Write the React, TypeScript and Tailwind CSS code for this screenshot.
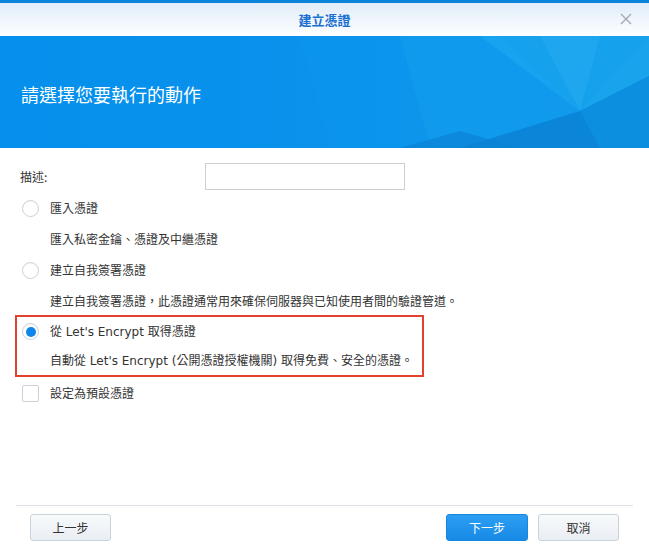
import React from "react";

const font = { fontFamily: '"DejaVu Sans", "Noto Sans CJK TC", sans-serif' };

function Radio({ checked }: { checked?: boolean }) {
  return (
    <span className="flex h-[17px] w-[17px] shrink-0 items-center justify-center rounded-full border border-[#c9d1d9] bg-white shadow-[inset_0_1px_1px_rgba(0,0,0,0.04)]">
      {checked && <span className="h-[10px] w-[10px] rounded-full bg-[#0c86ea]" />}
    </span>
  );
}

function Button({ children, primary, className }: { children: React.ReactNode; primary?: boolean; className?: string }) {
  return (
    <button
      className={
        (primary
          ? "border-[#1786e0] bg-gradient-to-b from-[#2c9ef2] to-[#168ae6] text-white "
          : "border-[#c9d3dc] bg-gradient-to-b from-[#f8fafc] to-[#e9eef3] text-[#333] ") +
        "flex h-[27px] items-center justify-center rounded-[3px] border text-[12px] " +
        (className ?? "")
      }
    >
      {children}
    </button>
  );
}

export default function App() {
  return (
    <div
      className="flex h-[550px] w-[649px] flex-col overflow-hidden bg-white text-[12px] text-[#333]"
      style={{ fontFamily: '"Noto Sans CJK TC", "DejaVu Sans", sans-serif' }}
    >
      <div className="h-[3px] bg-[#0a85dc]" />
      <div className="relative flex h-[33px] items-center justify-center bg-gradient-to-b from-[#e1edf9] to-[#fdfeff]">
        <span className="text-[13px] font-bold text-[#1a6fd0]">建立憑證</span>
        <svg className="absolute left-[620px] top-[10px]" width="12" height="12" viewBox="0 0 12 12">
          <path d="M1 1 L11 11 M11 1 L1 11" stroke="#a3aab2" strokeWidth="1.4" fill="none" />
        </svg>
      </div>
      <div className="relative h-[112px] bg-[#0a8fea]">
        <svg className="absolute inset-0" width="649" height="112" viewBox="0 0 649 112">
          <defs>
            <linearGradient id="bg" x1="0" y1="0" x2="1" y2="0">
              <stop offset="0" stopColor="#0490ec" />
              <stop offset="0.5" stopColor="#0a92ec" />
              <stop offset="1" stopColor="#1095e6" />
            </linearGradient>
          </defs>
          <rect width="649" height="112" fill="url(#bg)" />
          <polygon points="300,0 420,0 470,112 330,112" fill="#0c98ee" opacity="0.4" />
          <polygon points="400,0 500,0 580,75 460,112 430,112" fill="#129ff0" opacity="0.6" />
          <polygon points="480,0 649,0 580,75" fill="#1aa6f0" opacity="0.7" />
          <polygon points="580,75 649,0 649,40" fill="#22aef2" opacity="0.6" />
          <polygon points="580,75 649,40 649,112 600,112" fill="#0d8fe0" />
          <polygon points="460,112 580,75 600,112" fill="#0a85d8" />
          <polygon points="400,112 460,95 520,112" fill="#0b82d4" opacity="0.7" />
          <polygon points="540,0 600,0 580,75" fill="#2ab0f3" opacity="0.4" />
        </svg>
        <div className="relative pl-[21px] pt-[45px] text-[18px] leading-[26px] text-white">請選擇您要執行的動作</div>
      </div>

      <div className="flex-1 pl-[15px] pt-[15px]">
        <div className="flex h-[27px] items-center">
          <span className="ml-[5px] w-[185px]">描述:</span>
          <div className="h-[27px] w-[200px] border border-[#c9d0d6] bg-white" />
        </div>
        <div className="mt-[2px] flex h-[32px] items-center pl-[7px]">
          <Radio />
          <span className="ml-[11px]">匯入憑證</span>
        </div>
        <div className="flex h-[30px] items-center pl-[35px]">匯入私密金鑰、憑證及中繼憑證</div>
        <div className="flex h-[32px] items-center pl-[7px]">
          <Radio />
          <span className="ml-[11px]">建立自我簽署憑證</span>
        </div>
        <div className="flex h-[29px] items-center pl-[35px]">
          建立自我簽署憑證，此憑證通常用來確保伺服器與已知使用者間的驗證管道。
        </div>
        <div className="w-[409px] border-2 border-[#e2412f] pl-[5px]">
          <div className="flex h-[29px] items-center">
            <Radio checked />
            <span className="ml-[11px]" style={font}>從 Let's Encrypt 取得憑證</span>
          </div>
          <div className="flex h-[29px] items-center pl-[28px]" style={font}>
            自動從 Let's Encrypt (公開憑證授權機關) 取得免費、安全的憑證。
          </div>
        </div>
        <div className="flex h-[32px] items-center pl-[7px]">
          <span className="h-[17px] w-[17px] shrink-0 rounded-[2px] border border-[#c9d1d9] bg-white" />
          <span className="ml-[11px]">設定為預設憑證</span>
        </div>
      </div>

      <div className="mx-[16px] flex items-center border-t border-[#dde3e8] pb-[9px] pt-[8px]">
        <Button className="ml-[14px] w-[81px]">上一步</Button>
        <div className="flex-1" />
        <Button primary className="w-[82px]">下一步</Button>
        <Button className="ml-[10px] mr-[14px] w-[81px]">取消</Button>
      </div>
    </div>
  );
}
